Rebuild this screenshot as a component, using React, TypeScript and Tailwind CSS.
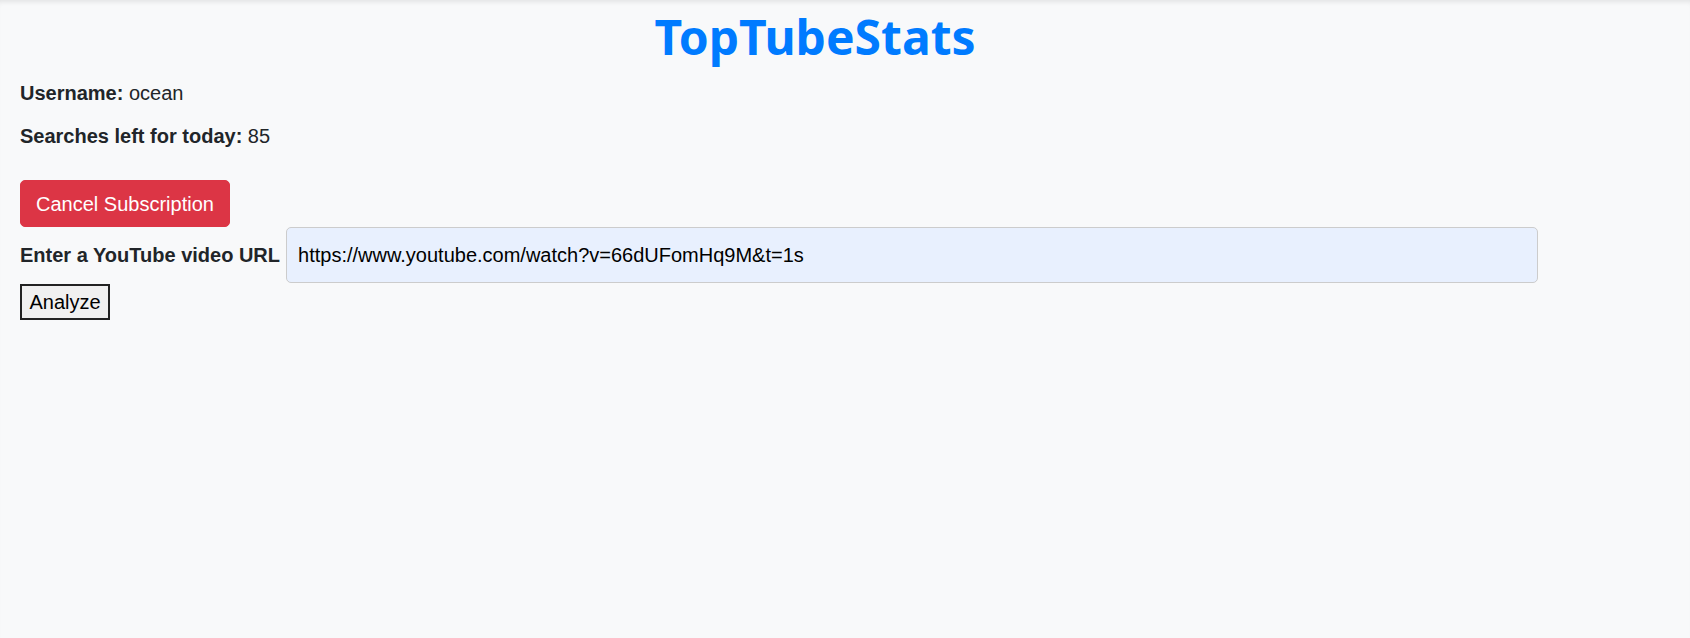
import React, { useState } from 'react';

export default function App() {
  const [url, setUrl] = useState('https://www.youtube.com/watch?v=66dUFomHq9M&t=1s');

  return (
    <div className="min-h-screen bg-[#f8f9fa] px-5 text-[20px] text-[#212529] shadow-[inset_0_5px_5px_-3px_rgba(0,0,0,0.09)] font-['Liberation_Sans',Arial,sans-serif]">
      <h1 className="w-[1590px] pt-[7px] text-center text-[48px] leading-[60px] font-bold text-[#007bff] font-['Noto_Sans',sans-serif]">
        TopTubeStats
      </h1>

      <p className="mt-[15px] leading-[23px]">
        <strong>Username:</strong> ocean
      </p>
      <p className="mt-5 leading-[23px]">
        <strong>Searches left for today:</strong> 85
      </p>

      <button
        type="button"
        className="mt-[32px] block h-[47px] rounded-[5px] border border-[#dc3545] bg-[#dc3545] px-[15px] leading-[30px] text-white"
      >
        Cancel Subscription
      </button>

      <form className="flex flex-col items-start" onSubmit={(e) => e.preventDefault()}>
        <div className="flex items-center gap-1.5">
          <label htmlFor="video-url" className="font-bold leading-[23px]">
            Enter a YouTube video URL
          </label>
          <input
            id="video-url"
            value={url}
            onChange={(e) => setUrl(e.target.value)}
            className="h-[56px] w-[1252px] rounded-[5px] border border-[#cccccc] bg-[#e8f0fe] pl-[11px] text-black outline-none"
          />
        </div>
        <button
          type="submit"
          className="mt-px h-[36px] w-[90px] border-2 border-[#222] bg-[#f0f0f0] text-black leading-[23px]"
        >
          Analyze
        </button>
      </form>
    </div>
  );
}
